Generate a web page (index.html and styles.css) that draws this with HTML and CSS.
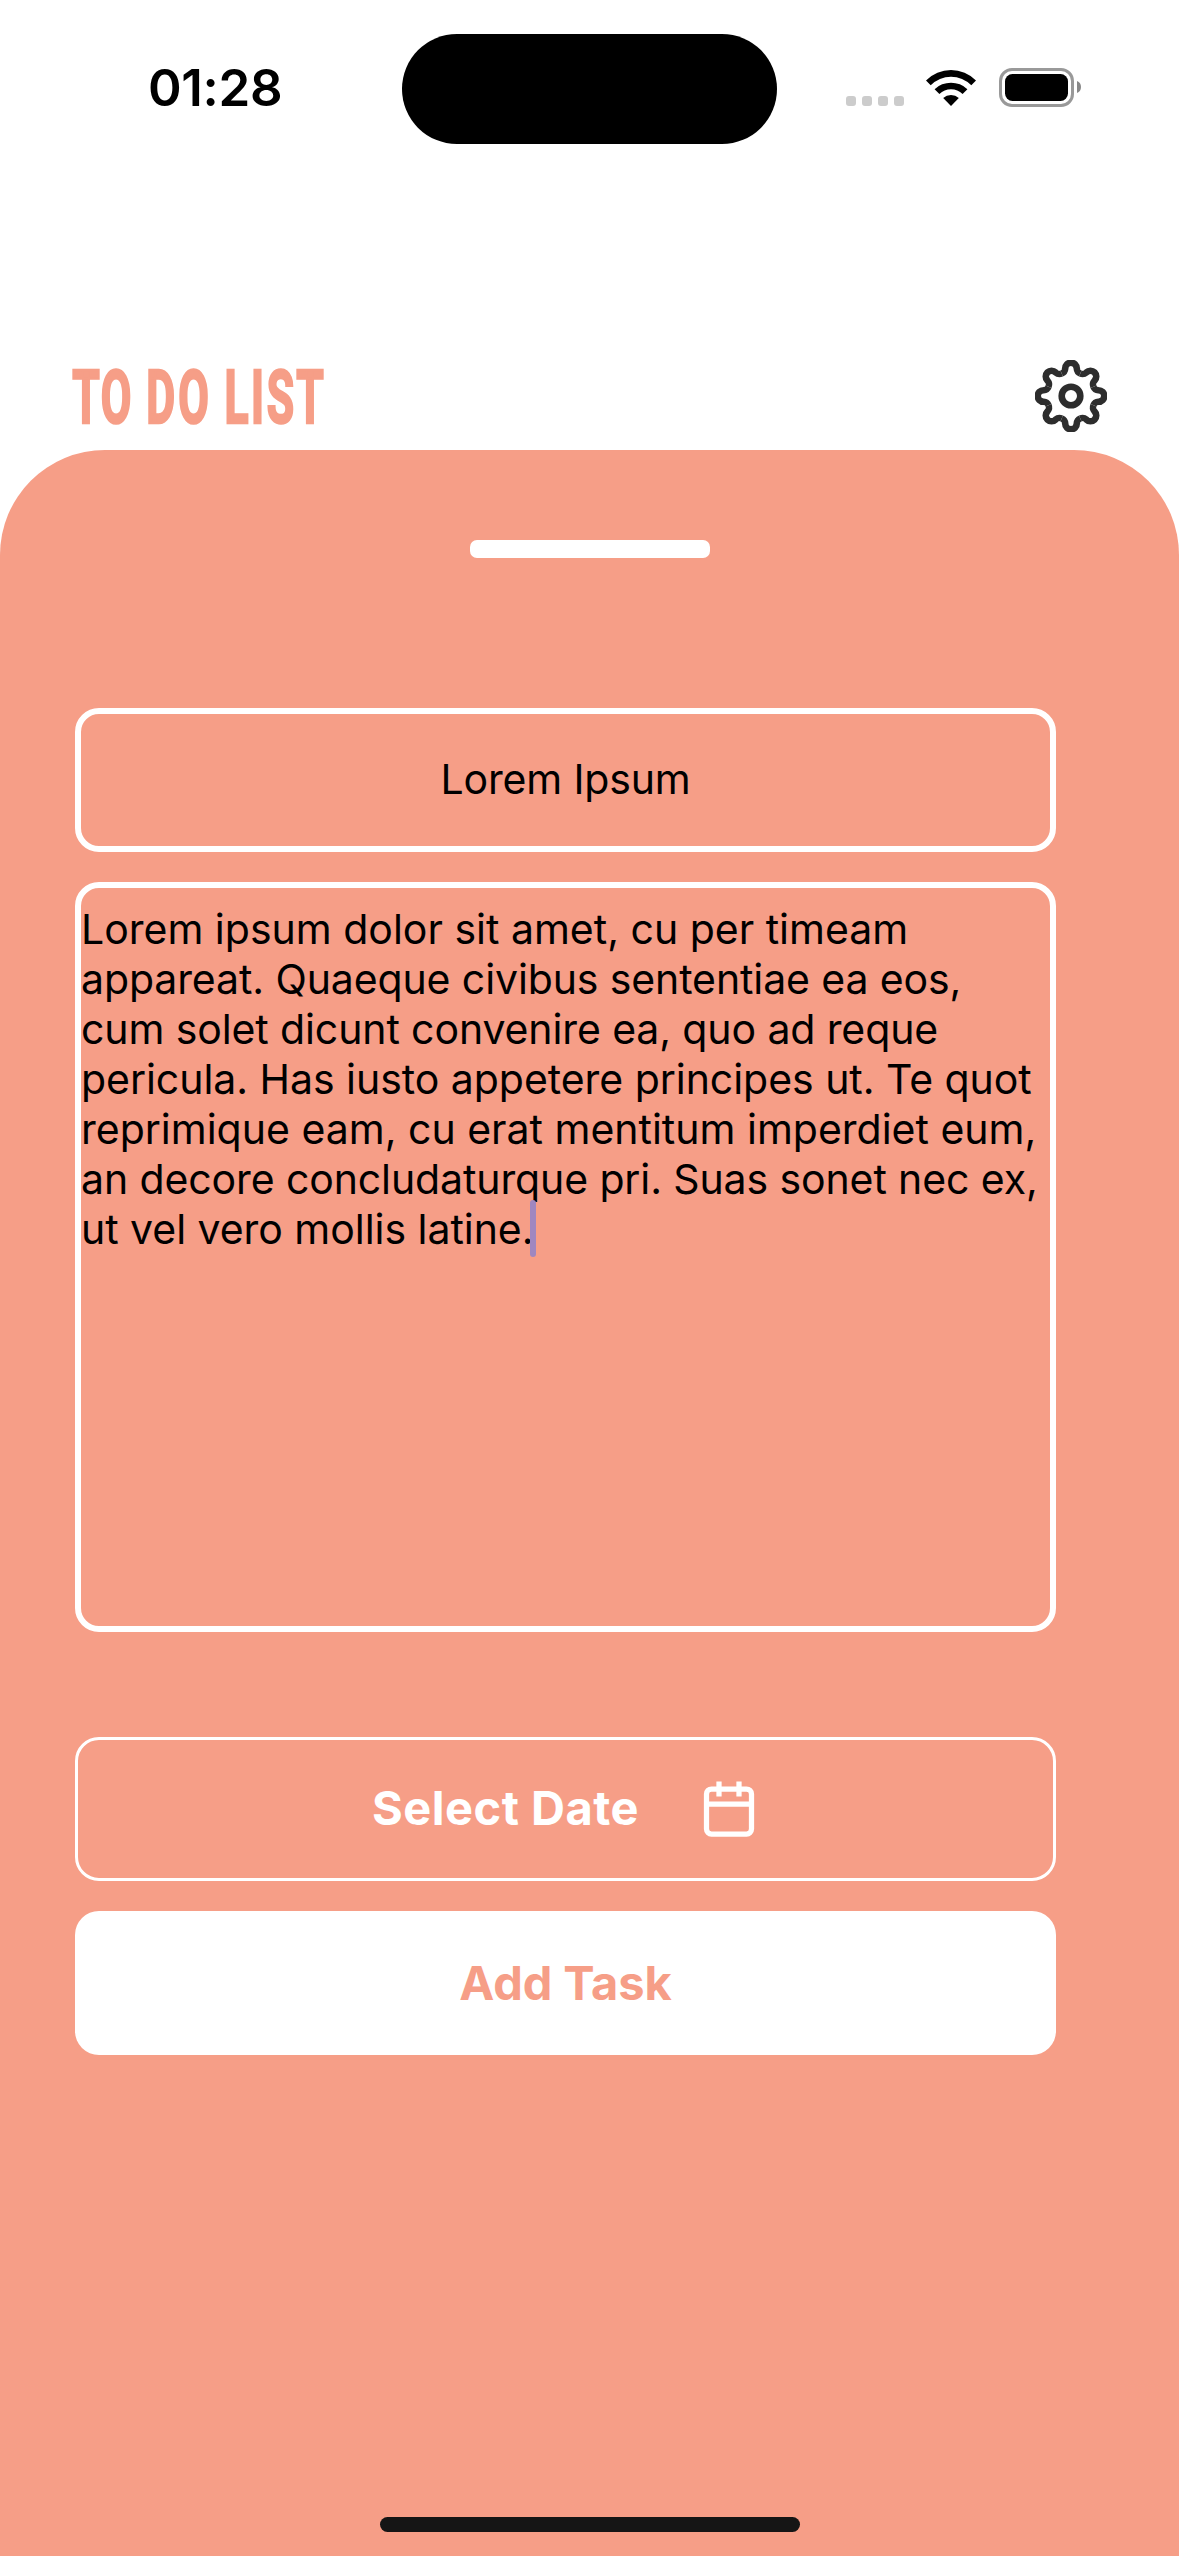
FILE: index.html
```html
<!DOCTYPE html>
<html lang="en">
<head>
<meta charset="utf-8">
<title>To Do List</title>
<link rel="stylesheet" href="styles.css">
</head>
<body>
<div class="screen">
  <header class="status-bar">
    <div class="time">01:28</div>
    <div class="island"></div>
    <div class="indicators">
      <div class="signal"><i></i><i></i><i></i><i></i></div>
      <svg class="wifi" viewBox="0 0 50 37" width="50" height="37">
        <path d="M0 11.6A35 35 0 0 1 50 11.6L45.3 16.3A28.5 28.5 0 0 0 4.7 16.3Z"/>
        <path d="M8.6 20.3A23.5 23.5 0 0 1 41.4 20.3L36.6 25A16.6 16.6 0 0 0 13.4 25Z"/>
        <path d="M17.2 29A11.4 11.4 0 0 1 32.8 29L25 37Z"/>
      </svg>
      <svg class="battery" viewBox="0 0 82 39" width="82" height="39">
        <rect x="1.5" y="1.5" width="72" height="36" rx="11.5" fill="none" stroke="#999" stroke-width="3"/>
        <rect x="6" y="6" width="63" height="27" rx="7.5"/>
        <path d="M78 13A6.5 6.5 0 0 1 78 25Z" fill="#888"/>
      </svg>
    </div>
  </header>
  <div class="title-bar">
    <h1 class="title">
      <svg viewBox="0 0 252 57" width="252" height="57">
        <text transform="scale(.6 1)" y="54.5" x="23.3 73.3 100 148 202.5 230 274 309 347.5 396.7">TO DO LIST</text>
      </svg>
    </h1>
    <svg class="gear" viewBox="-36 -36 72 72" width="72" height="72" fill="none" stroke="#2d2d2d" stroke-width="6.6">
      <circle r="9.3"/>
      <path id="tooth" d="M-9.3 -22.5C-6.1 -23.8 -6 -25 -5.8 -27.5A5.8 5.8 0 0 1 5.8 -27.5C6 -25 6.1 -23.8 9.3 -22.5"/>
      <use href="#tooth" transform="rotate(45)"/>
      <use href="#tooth" transform="rotate(90)"/>
      <use href="#tooth" transform="rotate(135)"/>
      <use href="#tooth" transform="rotate(180)"/>
      <use href="#tooth" transform="rotate(225)"/>
      <use href="#tooth" transform="rotate(270)"/>
      <use href="#tooth" transform="rotate(315)"/>
    </svg>
  </div>
  <main class="sheet">
    <div class="handle"></div>
    <div class="field name">Lorem Ipsum</div>
    <div class="field notes">
      <p>Lorem ipsum dolor sit amet, cu per timeam</p>
      <p class="tight">appareat. Quaeque civibus sententiae ea eos,</p>
      <p class="tight">cum solet dicunt convenire ea, quo ad reque</p>
      <p class="snug">pericula. Has iusto appetere principes ut. Te quot</p>
      <p>reprimique eam, cu erat mentitum imperdiet eum,</p>
      <p class="tight">an decore concludaturque pri. Suas sonet nec ex,</p>
      <p class="snug">ut vel vero mollis latine.<span class="caret"></span></p>
    </div>
    <div class="button date">
      <span>Select Date</span>
      <svg viewBox="0 0 24 24" width="60" height="60" fill="none" stroke="#fff" stroke-width="2.1">
        <rect x="3" y="4" width="18" height="18" rx="2"/>
        <path d="M3 10H21M8 1V7M16 1V7"/>
      </svg>
    </div>
    <div class="button add">Add Task</div>
    <div class="home-indicator"></div>
  </main>
</div>
</body>
</html>
```
FILE: styles.css
```css
* { box-sizing: border-box; margin: 0; }
body { background: #fff; font-family: Inter, sans-serif; color: #000; }
.screen { width: 1179px; height: 2556px; display: flex; flex-direction: column; overflow: hidden; }
.status-bar { height: 360px; padding: 34px 98px 0 148px; display: grid; grid-template-columns: 254px 375px 1fr; align-items: start; }
.time { font-size: 51px; font-weight: 600; line-height: 108px; letter-spacing: -.3px; }
.island { height: 110px; border-radius: 55px; background: #000; }
.indicators { height: 107px; display: flex; align-items: center; justify-content: flex-end; }
.signal { display: flex; gap: 6px; padding-top: 27px; margin-right: 22px; }
.signal i { width: 10px; height: 10px; border-radius: 3px; background: #ccc; }
.wifi { margin-right: 23px; }
.title-bar { height: 90px; padding: 0 72px; display: flex; justify-content: space-between; align-items: flex-start; }
.title { padding-top: 8px; font: bold 74px Roboto, sans-serif; line-height: 0; }
.title svg { overflow: visible; }
.title text { fill: #f69e87; stroke: #f69e87; stroke-width: 2.6px; text-anchor: middle; }
.sheet { flex: 1; background: #f69e87; border-radius: 105px 105px 0 0; padding: 90px 123px 24px 75px; display: flex; flex-direction: column; }
.handle { width: 240px; height: 18px; border-radius: 7px; background: #fff; margin: 0 0 150px 395px; }
.field { border: 6px solid #fff; border-radius: 24px; font-size: 41px; }
.name { height: 144px; line-height: 131px; text-align: center; margin-bottom: 30px; letter-spacing: -.15px; }
.notes { height: 750px; padding-top: 15.5px; margin-bottom: 105px; }
.notes p { height: 50.1px; line-height: 50.1px; white-space: nowrap; }
.notes .tight { letter-spacing: -.11px; }
.notes .snug { letter-spacing: -.04px; }
.caret { display: inline-block; width: 6px; height: 57px; margin: -20px 0 -20px -3px; vertical-align: 7px; border-radius: 3px; background: #9f87c0; }
.button { height: 144px; border-radius: 24px; display: flex; align-items: center; justify-content: center; font-size: 47px; font-weight: 700; line-height: 57px; }
.date { border: 3px solid #fff; color: #fff; gap: 60px; margin-bottom: 30px; }
.date span { letter-spacing: .5px; padding-bottom: 4px; }
.add { background: #fff; color: #f69e87; letter-spacing: -.1px; padding-bottom: 2px; }
.home-indicator { width: 420px; height: 15px; border-radius: 8px; background: #151515; margin: auto 0 0 305px; }
```
